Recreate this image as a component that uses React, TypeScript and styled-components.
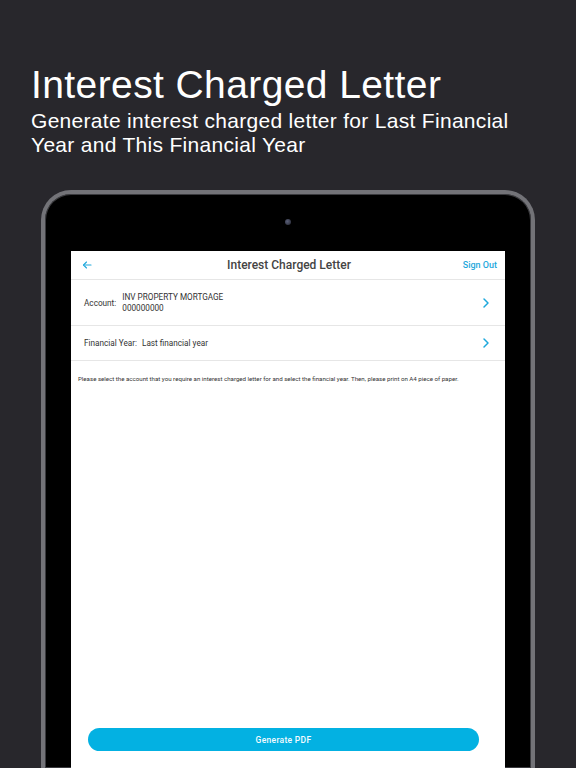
import React from 'react';
import styled, { createGlobalStyle } from 'styled-components';

const GlobalStyle = createGlobalStyle`
  *, *::before, *::after {
    box-sizing: border-box;
  }
  html, body {
    margin: 0;
    padding: 0;
    background: #28272c;
  }
`;

const Page = styled.div`
  width: 576px;
  height: 768px;
  overflow: hidden;
  background: #28272c;
  display: flex;
  flex-direction: column;
`;

const Hero = styled.header`
  padding: 64px 0 0 31px;
  color: #fff;
  font-family: 'Liberation Sans', Arial, sans-serif;
`;

const HeroTitle = styled.h1`
  margin: 0;
  font-size: 39px;
  font-weight: 400;
  line-height: 42px;
  letter-spacing: 0.4px;
`;

const HeroSub = styled.p`
  margin: 3px 0 0;
  font-size: 21px;
  line-height: 24px;
  font-weight: 400;
  letter-spacing: 0.3px;
  width: 520px;
`;

const Device = styled.div`
  margin: 33px 0 0 41px;
  width: 494px;
  flex: 1;
  background: #000;
  border: 4px solid #737378;
  border-bottom: none;
  border-radius: 30px 30px 0 0;
  display: flex;
  flex-direction: column;
  padding: 0 26px;
  box-shadow: inset 0 0 0 1px #3a3a3e;
`;

const Bezel = styled.div`
  height: 57px;
  display: flex;
  align-items: center;
  justify-content: center;
`;

const Camera = styled.span`
  width: 6px;
  height: 6px;
  border-radius: 50%;
  background: radial-gradient(circle at 40% 40%, #5a5f78, #23252f);
  margin-top: -1px;
`;

const Screen = styled.main`
  flex: 1;
  background: #fff;
  display: flex;
  flex-direction: column;
  font-family: Roboto, 'Liberation Sans', sans-serif;
  color: #333;
`;

const NavBar = styled.div`
  height: 29px;
  display: grid;
  grid-template-columns: 60px 1fr 60px;
  align-items: center;
  border-bottom: 1px solid #e6e6e6;
  padding: 0 8px 0 10px;
`;

const BackButton = styled.button`
  border: none;
  background: none;
  padding: 0;
  display: flex;
  color: #1ea8dc;
  cursor: pointer;
`;

const NavTitle = styled.div`
  text-align: center;
  font-size: 12px;
  font-weight: 500;
  color: #444;
`;

const SignOut = styled.button`
  border: none;
  background: none;
  padding: 0;
  font-family: inherit;
  font-size: 9px;
  font-weight: 500;
  color: #1ea8dc;
  justify-self: end;
  cursor: pointer;
`;

const Row = styled.div<{ $height: number }>`
  height: ${(p) => p.$height}px;
  display: flex;
  align-items: center;
  border-bottom: 1px solid #e6e6e6;
  padding: 0 15px 0 13px;
  font-size: 8.2px;
  color: #333;
`;

const Label = styled.span<{ $gap: number }>`
  margin-right: ${(p) => p.$gap}px;
`;

const Value = styled.div`
  flex: 1;
  line-height: 11px;
`;

const Chevron = styled.span`
  display: flex;
  color: #1ea8dc;
`;

const Note = styled.p`
  margin: 14px 0 0 7px;
  font-size: 6.15px;
  color: #333;
`;

const Spacer = styled.div`
  flex: 1;
`;

const PrimaryButton = styled.button`
  height: 23px;
  margin: 0 26px 17px 17px;
  border: none;
  border-radius: 12px;
  background: #03b1e2;
  color: #f4fbff;
  font-family: Roboto, 'Liberation Sans', sans-serif;
  font-size: 8.5px;
  font-weight: 500;
  letter-spacing: 0.3px;
  cursor: pointer;
`;

const ArrowLeft = () => (
  <svg width="12" height="12" viewBox="0 0 24 24" fill="none" stroke="currentColor" strokeWidth="2.2" strokeLinecap="round" strokeLinejoin="round">
    <path d="M20 12H5" />
    <path d="M11 6l-6 6 6 6" />
  </svg>
);

const ChevronRight = () => (
  <svg width="8" height="12" viewBox="0 0 8 12" fill="none" stroke="currentColor" strokeWidth="1.5" strokeLinecap="round" strokeLinejoin="round">
    <path d="M2 2l4 4-4 4" />
  </svg>
);

const App = () => {
  return (
    <Page>
      <GlobalStyle />
      <Hero>
        <HeroTitle>Interest Charged Letter</HeroTitle>
        <HeroSub>Generate interest charged letter for Last Financial Year and This Financial Year</HeroSub>
      </Hero>
      <Device>
        <Bezel>
          <Camera />
        </Bezel>
        <Screen>
          <NavBar>
            <BackButton aria-label="Back">
              <ArrowLeft />
            </BackButton>
            <NavTitle>Interest Charged Letter</NavTitle>
            <SignOut>Sign Out</SignOut>
          </NavBar>
          <Row $height={46}>
            <Label $gap={6}>Account:</Label>
            <Value>
              INV PROPERTY MORTGAGE
              <br />
              000000000
            </Value>
            <Chevron>
              <ChevronRight />
            </Chevron>
          </Row>
          <Row $height={35}>
            <Label $gap={5}>Financial Year:</Label>
            <Value>Last financial year</Value>
            <Chevron>
              <ChevronRight />
            </Chevron>
          </Row>
          <Note>
            Please select the account that you require an interest charged letter for and select the financial year. Then, please print on A4 piece of paper.
          </Note>
          <Spacer />
          <PrimaryButton>Generate PDF</PrimaryButton>
        </Screen>
      </Device>
    </Page>
  );
};

export default App;
